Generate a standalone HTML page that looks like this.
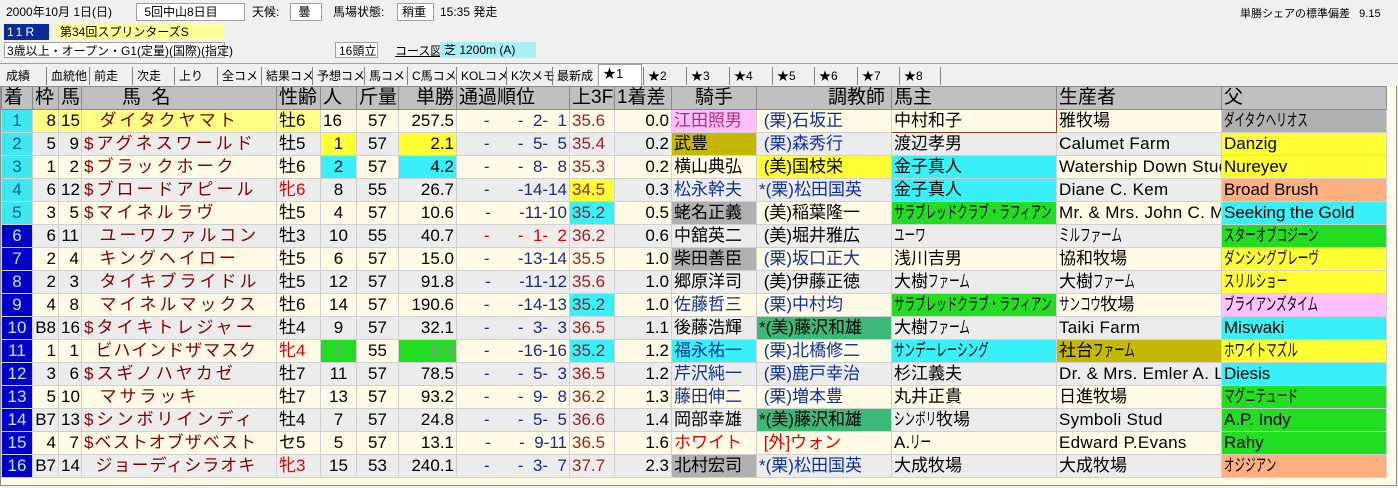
<!DOCTYPE html>
<html><head><meta charset="utf-8"><style>
*{box-sizing:border-box}
body{margin:0;width:1398px;height:488px;background:#f0f0f0;font-family:"Liberation Sans","Noto Sans CJK JP",sans-serif;position:relative;overflow:hidden;color:#000}
.a{position:absolute;white-space:nowrap}
.sm{font-size:12px;line-height:16px}
.box{background:#fff;border:1px solid #a0a0a0;padding:0 4px}
.tabs{position:absolute;top:63px;left:0;width:1398px;height:23px;border-top:1px solid #a0a0a0}
.tab{position:absolute;top:3px;font-size:12px;height:18px;line-height:18px;border-left:1px solid #808080;padding-left:4px}
.area{position:absolute;top:86px;left:0;width:1397px;height:400px;background:#fffbe6;border:1px solid #909090;border-top:none}
table{position:absolute;top:0;left:0;border-collapse:collapse;table-layout:fixed;width:1385px}
td,th{height:23px;padding:0 2px;font-size:17px;line-height:22px;font-weight:normal;white-space:nowrap;overflow:hidden;border:1px solid #d0d0d0}
th{background:#c0c0c0;border:1px solid #8a8a8a;text-align:left;font-size:19px}
tr.o td{background:#fffbe6}
tr.e td{background:#ececec}
.n1{background:#3ee6f0!important;color:#0060a0;text-align:center}
.n2{background:#0000c8!important;color:#b0f0ff;text-align:center}
.r{text-align:right}.c{text-align:center}
.nm{color:#800000;letter-spacing:3px}
.nl{letter-spacing:1px}
.red{color:#e00000}.bl{color:#1030a0}.dr{color:#a02020}
.y{background:#ffff33!important}.cy{background:#38f0f8!important}.g{background:#22dd22!important}
.gr{background:#b0b0b0!important}.ol{background:#c4b800!important}.pk{background:#ffc0ff!important}
.or{background:#ffb080!important}.tg{background:#3cb878!important}.ly{background:#ffff88!important}
.k{display:inline-block;transform:scaleX(.62);transform-origin:left center}
.ps{white-space:pre;color:#1a2a8a}
.en{letter-spacing:.3px}
</style></head><body>
<div class="a sm" style="left:6px;top:4px">2000年10月 1日(日)</div>
<div class="a sm box" style="left:136px;top:3px;width:109px">&nbsp;5回中山8日目</div>
<div class="a sm" style="left:252px;top:4px">天候:</div>
<div class="a sm box" style="left:290px;top:3px;width:32px">&nbsp;曇</div>
<div class="a sm" style="left:333px;top:4px">馬場状態:</div>
<div class="a sm box" style="left:397px;top:3px;width:37px">稍重</div>
<div class="a sm" style="left:440px;top:4px">15:35 発走</div>
<div class="a sm" style="left:1240px;top:6px;font-size:11px">単勝シェアの標準偏差&nbsp;&nbsp;&nbsp;9.15</div>
<div class="a sm" style="left:4px;top:24px;width:45px;height:16px;background:#0a2a9a;color:#fff;padding-left:3px;letter-spacing:3px">11R</div>
<div class="a sm" style="left:56px;top:24px;width:167px;height:16px;background:#ffff99;padding-left:4px">第34回スプリンターズS</div>
<div class="a sm box" style="left:4px;top:42px;width:221px;height:16px;padding-left:2px">3歳以上・オープン・G1(定量)(国際)(指定)</div>
<div class="a sm box" style="left:335px;top:42px;width:43px;height:16px;padding-left:3px">16頭立</div>
<div class="a sm" style="left:395px;top:43px;text-decoration:underline">コース図</div>
<div class="a sm" style="left:440px;top:42px;width:96px;height:16px;background:#a8f0f8;padding-left:4px">芝 1200m (A)</div>
<div class="tabs">
<div class="tab" style="left:2px;border:none">成績</div><div class="tab" style="left:46px">血統他</div><div class="tab" style="left:89px">前走</div><div class="tab" style="left:132px">次走</div><div class="tab" style="left:174px">上り</div><div class="tab" style="left:217px">全コメ</div><div class="tab" style="left:261px">結果コメ</div><div class="tab" style="left:312px">予想コメ</div><div class="tab" style="left:364px">馬コメ</div><div class="tab" style="left:407px">C馬コメ</div><div class="tab" style="left:456px">KOLコメ</div><div class="tab" style="left:506px">K次メモ</div><div class="tab" style="left:552px">最新成</div>
<div class="tab" style="left:598px;top:0;height:23px;background:#fff;border:1px solid #a0a0a0;border-bottom:none;width:44px;font-size:13px">★1</div>
<div class="tab" style="left:643px">★2</div><div class="tab" style="left:686px">★3</div><div class="tab" style="left:729px">★4</div><div class="tab" style="left:772px">★5</div><div class="tab" style="left:814px">★6</div><div class="tab" style="left:857px">★7</div><div class="tab" style="left:899px;width:42px;border-right:1px solid #808080">★8</div>
</div>
<div class="area">
<table>
<colgroup><col style="width:31px"><col style="width:26px"><col style="width:23px"><col style="width:195px"><col style="width:44px"><col style="width:36px"><col style="width:42px"><col style="width:58px"><col style="width:113px"><col style="width:45px"><col style="width:57px"><col style="width:85px"><col style="width:135px"><col style="width:165px"><col style="width:165px"><col style="width:165px"></colgroup>
<tr><th>着</th><th>枠</th><th>馬</th><th style="padding-left:40px">馬&nbsp;&nbsp;名</th><th>性齢</th><th>人</th><th>斤量</th><th class="r">単勝</th><th>通過順位</th><th>上3F</th><th>1着差</th><th class="c">騎手</th><th class="r" style="padding-right:6px">調教師</th><th>馬主</th><th>生産者</th><th>父</th></tr>
<tr class="o"><td class="n1">1</td><td class="r ly">8</td><td class="r ly">15</td><td class="nm ly">&nbsp;&nbsp;ダイタクヤマト</td><td class="ly">牡6</td><td>16</td><td class="c">57</td><td class="r">257.5</td><td class="r ps">-&#8199;&#8199;&#8199;-&#8199;2-&#8199;1</td><td class="dr">35.6</td><td class="r">0.0</td><td class="pk" style="color:#b03070">江田照男</td><td class="bl">&nbsp;(栗)石坂正</td><td style="border:1px solid #a04020">中村和子</td><td>雅牧場</td><td class="gr"><span class="k">ダイタクヘリオス</span></td></tr>
<tr class="e"><td class="n1">2</td><td class="r">5</td><td class="r">9</td><td class="nm">$アグネスワールド</td><td>牡5</td><td class="c y">1</td><td class="c">57</td><td class="r y">2.1</td><td class="r ps">-&#8199;&#8199;&#8199;-&#8199;5-&#8199;5</td><td class="dr">35.4</td><td class="r">0.2</td><td class="ol">武豊</td><td class="bl">&nbsp;(栗)森秀行</td><td>渡辺孝男</td><td class="en">Calumet Farm</td><td class="y">Danzig</td></tr>
<tr class="o"><td class="n1">3</td><td class="r">1</td><td class="r">2</td><td class="nm">$ブラックホーク</td><td>牡6</td><td class="c cy">2</td><td class="c">57</td><td class="r cy">4.2</td><td class="r ps">-&#8199;&#8199;&#8199;-&#8199;8-&#8199;8</td><td class="dr">35.3</td><td class="r">0.2</td><td>横山典弘</td><td class="y">&nbsp;(美)国枝栄</td><td class="cy">金子真人</td><td class="en">Watership Down Stud</td><td class="y">Nureyev</td></tr>
<tr class="e"><td class="n1">4</td><td class="r">6</td><td class="r">12</td><td class="nm">$ブロードアピール</td><td class="red">牝6</td><td class="c">8</td><td class="c">55</td><td class="r">26.7</td><td class="r ps">-&#8199;&#8199;&#8199;-14-14</td><td class="dr y">34.5</td><td class="r">0.3</td><td class="bl">松永幹夫</td><td class="bl">*(栗)松田国英</td><td class="cy">金子真人</td><td class="en">Diane C. Kem</td><td class="or">Broad Brush</td></tr>
<tr class="o"><td class="n1">5</td><td class="r">3</td><td class="r">5</td><td class="nm">$マイネルラヴ</td><td>牡5</td><td class="c">4</td><td class="c">57</td><td class="r">10.6</td><td class="r ps">-&#8199;&#8199;&#8199;-11-10</td><td class="dr cy">35.2</td><td class="r">0.5</td><td class="gr">蛯名正義</td><td>&nbsp;(美)稲葉隆一</td><td class="g"><span class="k">サラブレッドクラブ・ラフィアン</span></td><td class="en">Mr. &amp; Mrs. John C. Mabee</td><td class="cy">Seeking the Gold</td></tr>
<tr class="e"><td class="n2">6</td><td class="r">6</td><td class="r">11</td><td class="nm">&nbsp;&nbsp;ユーワファルコン</td><td>牡3</td><td class="c">10</td><td class="c">55</td><td class="r">40.7</td><td class="r ps" style="color:#e00000">-&#8199;&#8199;&#8199;-&#8199;1-&#8199;2</td><td class="dr">36.2</td><td class="r">0.6</td><td>中舘英二</td><td>&nbsp;(美)堀井雅広</td><td><span class="k">ユーワ</span></td><td><span class="k">ミルファーム</span></td><td class="g"><span class="k">スターオブコジーン</span></td></tr>
<tr class="o"><td class="n2">7</td><td class="r">2</td><td class="r">4</td><td class="nm">&nbsp;&nbsp;キングヘイロー</td><td>牡5</td><td class="c">6</td><td class="c">57</td><td class="r">15.0</td><td class="r ps">-&#8199;&#8199;&#8199;-13-14</td><td class="dr">35.5</td><td class="r">1.0</td><td class="gr">柴田善臣</td><td class="bl">&nbsp;(栗)坂口正大</td><td>浅川吉男</td><td>協和牧場</td><td class="y"><span class="k">ダンシングブレーヴ</span></td></tr>
<tr class="e"><td class="n2">8</td><td class="r">2</td><td class="r">3</td><td class="nm">&nbsp;&nbsp;タイキブライドル</td><td>牡5</td><td class="c">12</td><td class="c">57</td><td class="r">91.8</td><td class="r ps">-&#8199;&#8199;&#8199;-11-12</td><td class="dr">35.6</td><td class="r">1.0</td><td>郷原洋司</td><td>&nbsp;(美)伊藤正徳</td><td>大樹<span class="k">ファーム</span></td><td>大樹<span class="k">ファーム</span></td><td class="y"><span class="k">スリルショー</span></td></tr>
<tr class="o"><td class="n2">9</td><td class="r">4</td><td class="r">8</td><td class="nm">&nbsp;&nbsp;マイネルマックス</td><td>牡6</td><td class="c">14</td><td class="c">57</td><td class="r">190.6</td><td class="r ps">-&#8199;&#8199;&#8199;-14-13</td><td class="dr cy">35.2</td><td class="r">1.0</td><td class="bl">佐藤哲三</td><td class="bl">&nbsp;(栗)中村均</td><td class="g"><span class="k">サラブレッドクラブ・ラフィアン</span></td><td><span class="k" style="margin-right:-26px">サンコウ</span>牧場</td><td class="pk"><span class="k">ブライアンズタイム</span></td></tr>
<tr class="e"><td class="n2">10</td><td class="r">B8</td><td class="r">16</td><td class="nm">$タイキトレジャー</td><td>牡4</td><td class="c">9</td><td class="c">57</td><td class="r">32.1</td><td class="r ps">-&#8199;&#8199;&#8199;-&#8199;3-&#8199;3</td><td class="dr">36.5</td><td class="r">1.1</td><td>後藤浩輝</td><td class="tg">*(美)藤沢和雄</td><td>大樹<span class="k">ファーム</span></td><td class="en">Taiki Farm</td><td class="cy">Miswaki</td></tr>
<tr class="o"><td class="n2">11</td><td class="r">1</td><td class="r">1</td><td class="nm nl">&nbsp;&nbsp;ビハインドザマスク</td><td class="red">牝4</td><td class="c g" style="color:#80a080">3</td><td class="c">55</td><td class="r g" style="color:#80a080">6.9</td><td class="r ps">-&#8199;&#8199;&#8199;-16-16</td><td class="dr cy">35.2</td><td class="r">1.2</td><td class="cy bl">福永祐一</td><td class="bl">&nbsp;(栗)北橋修二</td><td class="cy"><span class="k">サンデーレーシング</span></td><td class="ol">社台<span class="k">ファーム</span></td><td class="y"><span class="k">ホワイトマズル</span></td></tr>
<tr class="e"><td class="n2">12</td><td class="r">3</td><td class="r">6</td><td class="nm">$スギノハヤカゼ</td><td>牡7</td><td class="c">11</td><td class="c">57</td><td class="r">78.5</td><td class="r ps">-&#8199;&#8199;&#8199;-&#8199;5-&#8199;3</td><td class="dr">36.5</td><td class="r">1.2</td><td class="bl">芹沢純一</td><td class="bl">&nbsp;(栗)鹿戸幸治</td><td>杉江義夫</td><td class="en">Dr. &amp; Mrs. Emler A. Ladd</td><td class="cy">Diesis</td></tr>
<tr class="o"><td class="n2">13</td><td class="r">5</td><td class="r">10</td><td class="nm">&nbsp;&nbsp;マサラッキ</td><td>牡7</td><td class="c">13</td><td class="c">57</td><td class="r">93.2</td><td class="r ps">-&#8199;&#8199;&#8199;-&#8199;9-&#8199;8</td><td class="dr">36.2</td><td class="r">1.3</td><td class="bl">藤田伸二</td><td class="bl">&nbsp;(栗)増本豊</td><td>丸井正貴</td><td>日進牧場</td><td class="g"><span class="k">マグニテュード</span></td></tr>
<tr class="e"><td class="n2">14</td><td class="r">B7</td><td class="r">13</td><td class="nm">$シンボリインディ</td><td>牡4</td><td class="c">7</td><td class="c">57</td><td class="r">24.8</td><td class="r ps">-&#8199;&#8199;&#8199;-&#8199;5-&#8199;5</td><td class="dr">36.6</td><td class="r">1.4</td><td>岡部幸雄</td><td class="tg">*(美)藤沢和雄</td><td><span class="k" style="margin-right:-26px">シンボリ</span>牧場</td><td class="en">Symboli Stud</td><td class="g">A.P. Indy</td></tr>
<tr class="o"><td class="n2">15</td><td class="r">4</td><td class="r">7</td><td class="nm nl">$ベストオブザベスト</td><td>セ5</td><td class="c">5</td><td class="c">57</td><td class="r">13.1</td><td class="r ps">-&#8199;&#8199;&#8199;-&#8199;9-11</td><td class="dr">36.5</td><td class="r">1.6</td><td class="red">ホワイト</td><td class="red">&nbsp;[外]ウォン</td><td>A.<span class="k">リー</span></td><td class="en">Edward P.Evans</td><td class="g">Rahy</td></tr>
<tr class="e"><td class="n2">16</td><td class="r">B7</td><td class="r">14</td><td class="nm nl">&nbsp;&nbsp;ジョーディシラオキ</td><td class="red">牝3</td><td class="c">15</td><td class="c">53</td><td class="r">240.1</td><td class="r ps">-&#8199;&#8199;&#8199;-&#8199;3-&#8199;7</td><td class="dr">37.7</td><td class="r">2.3</td><td class="gr">北村宏司</td><td class="bl">*(栗)松田国英</td><td>大成牧場</td><td>大成牧場</td><td class="or"><span class="k">オジジアン</span></td></tr>
</table>
</div>
</body></html>
